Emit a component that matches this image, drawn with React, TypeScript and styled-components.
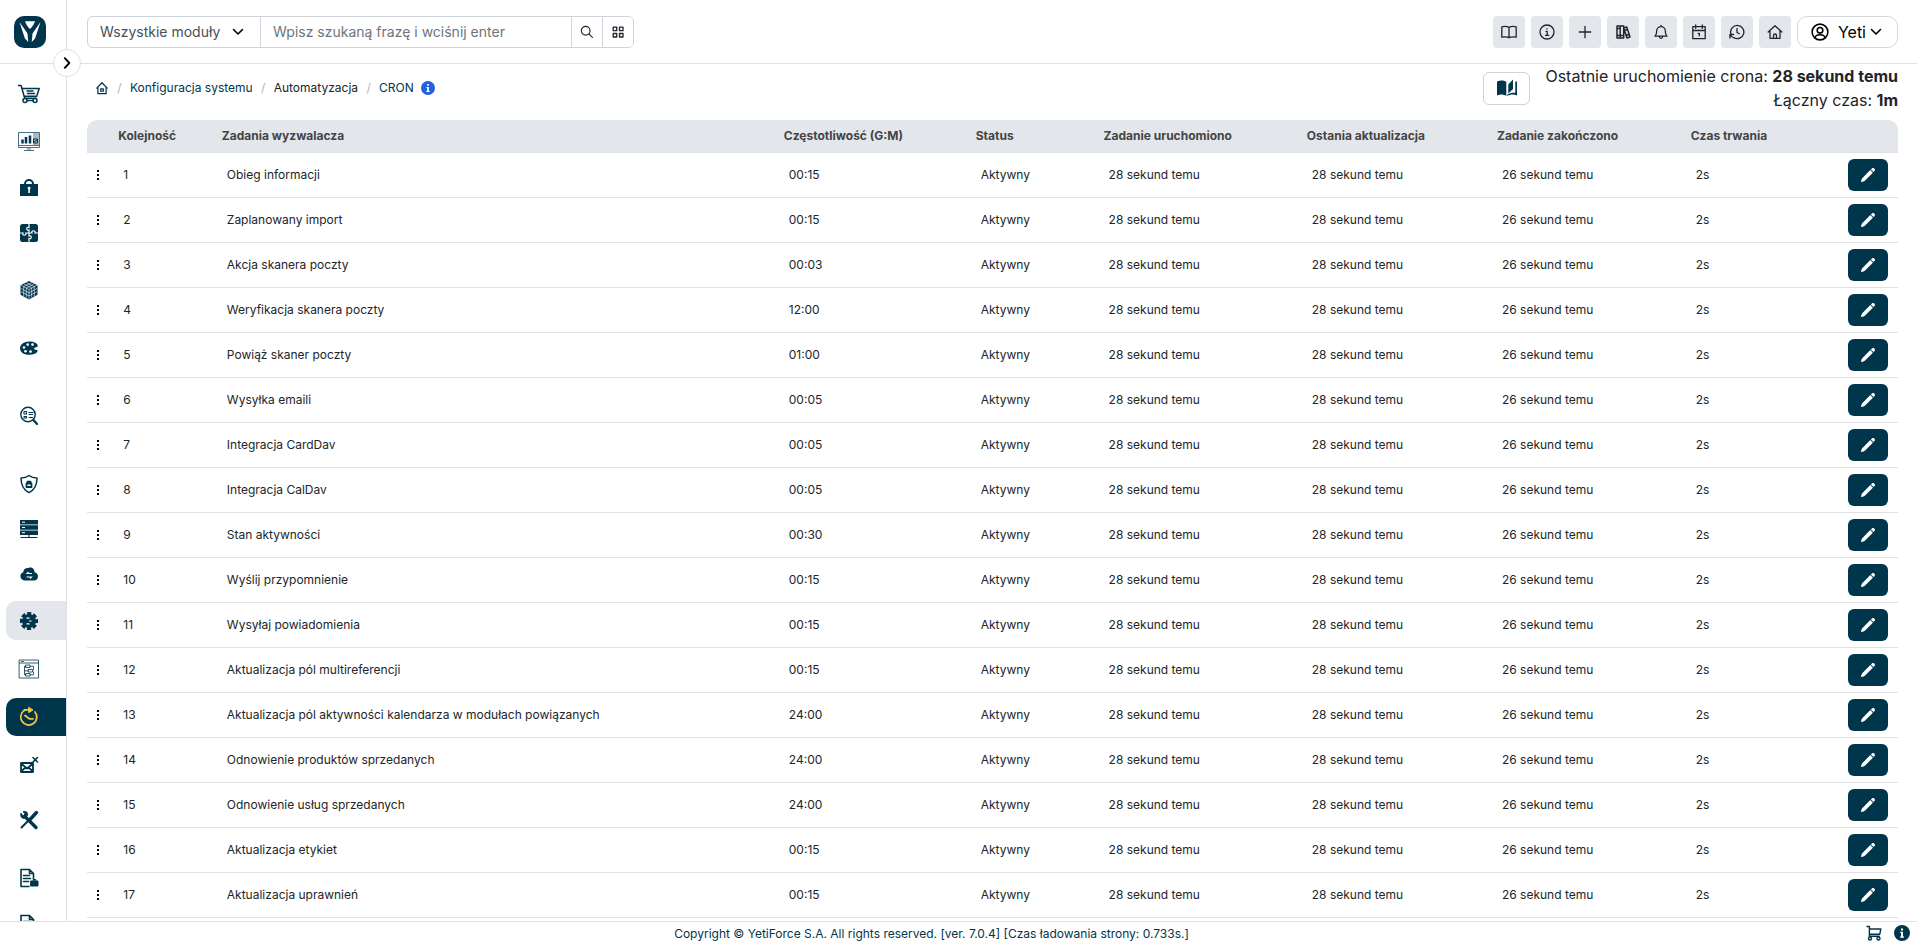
import React from "react";
import styled, { createGlobalStyle, css } from "styled-components";

const NAVY = "#00364b";
const LINE = "#dee2e6";
const FILL = "#e3e6eb";

const Global = createGlobalStyle`
  *, *::before, *::after { box-sizing: border-box; }
  body { margin: 0; font-family: Inter, "Liberation Sans", sans-serif; font-size: 12px; color: #212529; background: #fff; }
  button, input, select { font: inherit; color: inherit; margin: 0; }
  a { color: ${NAVY}; text-decoration: none; }
`;

const Page = styled.div`
  display: flex;
  flex-direction: column;
  height: 100vh;
  overflow: hidden;
`;

const Body = styled.div`
  display: flex;
  flex: 1;
  min-height: 0;
`;

const Sidebar = styled.aside`
  position: relative;
  display: flex;
  flex-direction: column;
  flex: none;
  width: 67px;
  border-right: 1px solid ${LINE};
`;

const LogoBox = styled.a`
  display: flex;
  flex: none;
  height: 64px;
  padding: 16px 14px;
  border-bottom: 1px solid ${LINE};
`;

const Toggle = styled.button`
  position: absolute;
  top: 49px;
  right: -15px;
  z-index: 2;
  display: grid;
  place-items: center;
  width: 28px;
  height: 28px;
  padding: 0;
  border: 1px solid ${LINE};
  border-radius: 50%;
  background: #fff;
  color: #000;
`;

const Menu = styled.nav`
  display: flex;
  flex-direction: column;
  flex: 1;
  min-height: 0;
  padding: 11px 0 0 6px;
  overflow: hidden;
`;

const MenuItem = styled.a<{ $h: number; $state?: "open" | "active" }>`
  display: flex;
  flex: none;
  align-items: center;
  height: ${(p) => p.$h}px;
  padding-left: 11px;
  color: ${NAVY};
  ${(p) => p.$state && css`border-radius: 10px 0 0 10px;`}
  ${(p) => p.$state === "open" && css`background: ${FILL};`}
  ${(p) => p.$state === "active" && css`background: ${NAVY}; color: #f6c344;`}
`;

const Main = styled.div`
  display: flex;
  flex-direction: column;
  flex: 1;
  min-width: 0;
`;

const Header = styled.header`
  display: flex;
  align-items: center;
  justify-content: space-between;
  flex: none;
  height: 64px;
  padding: 0 19px 0 20px;
  border-bottom: 1px solid ${LINE};
`;

const Search = styled.form`
  display: flex;
  height: 32px;
  border: 1px solid #ced4da;
  border-radius: 6px;
  overflow: hidden;
  font-size: 14px;
`;

const SelectWrap = styled.label`
  display: grid;
  align-items: center;
  width: 173px;
  border-right: 1px solid #ced4da;
  > * { grid-area: 1 / 1; }
  svg { justify-self: end; margin-right: 16px; pointer-events: none; color: #000; }
`;

const ModuleSelect = styled.select`
  width: 100%;
  height: 100%;
  padding: 0 12px;
  border: 0;
  appearance: none;
  background: none;
  color: #495057;
`;

const Phrase = styled.input`
  width: 310px;
  padding: 0 12px;
  border: 0;
  background: none;
  &::placeholder { color: #6c757d; opacity: 1; }
`;

const SearchButton = styled.button`
  display: grid;
  place-items: center;
  width: 31px;
  padding: 0;
  border: 0;
  border-left: 1px solid #ced4da;
  background: #fff;
`;

const Actions = styled.div`
  display: flex;
  gap: 6px;
`;

const ActionButton = styled.button`
  display: grid;
  place-items: center;
  width: 32px;
  height: 32px;
  padding: 0;
  border: 0;
  border-radius: 4px;
  background: ${FILL};
`;

const UserButton = styled.button`
  display: flex;
  align-items: center;
  height: 32px;
  padding: 0 15px 0 13px;
  border: 1px solid #d5d9dd;
  border-radius: 10px;
  background: #fff;
  color: #000;
  font-size: 16px;
  span { margin: 0 4px 0 9px; }
`;

const Content = styled.main`
  flex: 1;
  min-height: 0;
  padding: 0 19px 0 20px;
  overflow: hidden;
`;

const TitleBar = styled.div`
  display: flex;
  align-items: center;
  justify-content: space-between;
  height: 56px;
`;

const Crumbs = styled.nav`
  display: flex;
  align-items: center;
  margin-bottom: 8px;
  padding-left: 8px;
  line-height: 14px;
  svg { display: block; }
`;

const Slash = styled.span`
  width: 21px;
  color: #adb5bd;
  text-align: center;
`;

const InfoDot = styled.button`
  display: grid;
  margin: 0 0 0 7px;
  padding: 0;
  border: 0;
  background: none;
  color: #2361e0;
`;

const CronInfo = styled.div`
  display: flex;
  align-items: center;
  gap: 15px;
  margin-bottom: 8px;
`;

const ManualLink = styled.a`
  display: grid;
  place-items: center;
  width: 47px;
  height: 33px;
  border: 1px solid #ced4da;
  border-radius: 6px;
`;

const CronText = styled.div`
  font-size: 16px;
  line-height: 24px;
  text-align: right;
`;

const Table = styled.table`
  width: 100%;
  table-layout: fixed;
  border-collapse: separate;
  border-spacing: 0;
`;

const Th = styled.th`
  height: 33px;
  padding: 0 5px 2px;
  border-bottom: 1px solid ${LINE};
  background: ${FILL};
  color: #444;
  font-weight: 700;
  text-align: left;
  &:first-child { border-top-left-radius: 10px; }
  &:last-child { border-top-right-radius: 10px; }
`;

const Td = styled.td`
  height: 45px;
  padding: 0 10px 2px;
  border-bottom: 1px solid ${LINE};
`;

const DragCell = styled(Td)`
  padding: 0 7px;
  svg { display: block; }
`;

const DurationCell = styled(Td)`
  padding: 0 10px;
  > div { display: flex; align-items: center; }
  span { padding-bottom: 2px; }
`;

const EditButton = styled.button`
  display: grid;
  place-items: center;
  width: 40px;
  height: 32px;
  margin-left: auto;
  padding: 0;
  border: 0;
  border-radius: 6px;
  background: ${NAVY};
  color: #fff;
`;

const Footer = styled.footer`
  display: grid;
  grid-template-columns: 1fr 54px;
  align-items: center;
  flex: none;
  height: 23px;
  border-top: 1px solid ${LINE};
  color: ${NAVY};
  p { margin: 0; text-align: center; }
`;

const FooterLinks = styled.div`
  display: flex;
  align-items: center;
  justify-content: flex-end;
  gap: 12px;
  padding-right: 7px;
  a { display: grid; }
`;

type SvgProps = { size?: number; box?: number; children: React.ReactNode; w?: number };

/* Outline icon on a square grid. */
const Line = ({ size = 16, box = 16, w = 1.3, children }: SvgProps) => (
  <svg width={size} height={size} viewBox={`0 0 ${box} ${box}`} fill="none" stroke="currentColor" strokeWidth={w} strokeLinecap="round" strokeLinejoin="round" aria-hidden="true">
    {children}
  </svg>
);

/* Filled icon on a square grid. */
const Solid = ({ size = 16, box = 16, children }: SvgProps) => (
  <svg width={size} height={size} viewBox={`0 0 ${box} ${box}`} fill="currentColor" aria-hidden="true">
    {children}
  </svg>
);

const Logo = () => (
  <svg width="32" height="32" viewBox="0 0 32 32" aria-hidden="true">
    <rect width="32" height="32" rx="10" fill={NAVY} />
    <path fill="#fff" d="M11 5.300h10l-1.500 3.500-2.800 3.700h-1.400l-2.800-3.700zM5.500 6l8 11.500.8 8.500-3.400-3.500zM26.500 6l-8 11.500-.8 8.500 3.400-3.500z" />
  </svg>
);

const Chevron = ({ size = 12 }: { size?: number }) => (
  <Line size={size} box={12} w={1.6}><path d="M1.500 3.500 6 8l4.500-4.500" /></Line>
);

const Cart = () => (
  <Line size={24} box={24} w={1.5}>
    <path d="M1.500 3.500h2.600l3.600 12.800h11.600M5.200 6.500h17l-2.500 7.800H7.500M10 9h6M10.500 11.500h7" />
    <circle cx="8" cy="18.600" r="2" /><circle cx="18" cy="18.600" r="2" /><path d="M10 18.600h6" />
  </Line>
);

const SmallCart = () => (
  <Line w={1.4}>
    <path d="M1 1.500h2.400v9.700h9.800M3.400 4h11.400l-1 5.200H3.400" />
    <circle cx="4" cy="13.500" r="1.500" /><circle cx="12.500" cy="13.500" r="1.500" />
  </Line>
);

const InfoSolid = ({ size = 14 }: { size?: number }) => (
  <Solid size={size}>
    <path fillRule="evenodd" d="M8 0a8 8 0 1 1 0 16A8 8 0 0 1 8 0zM7 3.500v2h2v-2zM6.200 6.800V8H7v3.500h-.9v1.200h3.900v-1.200H9V6.800z" />
  </Solid>
);

const Home = () => (
  <Line><path d="M1.200 8 8 1.700 14.800 8M3 6.600v7.700h10V6.600M6.500 14v-2.500a1.500 1.500 0 0 1 3 0V14" /></Line>
);

const CrumbHome = () => (
  <Line size={14} w={1.4}><path d="M2 8.200 8 2l6 6.200M3.300 7.200v7.300h9.400V7.200M6.500 9h3v2.700h-3z" /></Line>
);

const menu: { label: string; h: number; state?: "open" | "active"; icon: React.ReactNode }[] = [
  { label: "Sklep", h: 38, icon: <Cart /> },
  {
    label: "Pulpit", h: 56,
    icon: (
      <svg width="24" height="24" viewBox="0 0 24 24" fill="none" aria-hidden="true">
        <path d="M16 4h6v12h-6z" fill="#a9bcc6" />
        <path d="M1.500 3.500h21v15h-21zM1.500 16.500h21" stroke="#49708a" strokeWidth="1" />
        <path d="M5.500 10.500v4M9 8v6.500M13 6.500v8" stroke={NAVY} strokeWidth="2.500" />
        <path d="M16.500 10h4v4h-4zM16.500 13l4-2" stroke={NAVY} />
        <path d="M7 21.500h10M10 20h4" stroke="#49708a" strokeWidth="1.200" />
      </svg>
    ),
  },
  {
    label: "Uprawnienia", h: 38,
    icon: <Solid size={24} box={24}><path fillRule="evenodd" d="M7 8a5 5 0 0 1 10 0h4v12H3V8zm2 0h6a3 3 0 0 0-6 0zm1.500 4 .8 1.500V17h1.600v-3.500l.8-1.500a1.700 1.700 0 0 0-3.200 0z" /></Solid>,
  },
  {
    label: "Procesy", h: 52,
    icon: (
      <svg width="24" height="24" viewBox="0 0 24 24" aria-hidden="true">
        <rect x="3" y="3" width="18" height="18" rx="2.500" fill={NAVY} />
        <path d="M12 3v3.500c-3-1.500-3 4 0 2.500v6c3-1.500 3 4 0 2.500V21M3 12h3c-1.500 3 4 3 2.800 0H15c-1.500-3 4.300-3 3 0h3" fill="none" stroke="#fff" strokeWidth="1.200" />
      </svg>
    ),
  },
  {
    label: "Moduły", h: 62,
    icon: (
      <svg width="24" height="24" viewBox="0 0 24 24" aria-hidden="true">
        <path d="m12 3 8.500 4.200v9.600L12 21.500l-8.500-4.700V7.200z" fill={NAVY} />
        <path d="M4 7.200 12 11.500l8-4.300M12 11.500V21M4 10.500l8 4.300 8-4.300M4 13.700l8 4.200 8-4.200M6.700 5.800l8 4.200v9.500M9.300 4.500l8 4.200v9.500M17.300 5.800l-8 4.200v9.500M14.700 4.500l-8 4.200v9.500" fill="none" stroke="#fff" strokeWidth=".6" />
      </svg>
    ),
  },
  {
    label: "Wygląd", h: 54,
    icon: (
      <svg width="24" height="24" viewBox="0 0 24 24" aria-hidden="true">
        <path d="M12 5.500c5 0 9 2 8.800 4.600-.2 1.700-3.800 1-3.600 2.800.2 1.300 3.500.1 3.400 2.100C20.300 17.300 16 18.800 12 18.800c-5.500 0-9-3-9-6.600s4-6.700 9-6.700z" fill={NAVY} />
        <g fill="#fff"><circle cx="15.500" cy="8.600" r="1.300" /><circle cx="10.700" cy="8.600" r="1.300" /><circle cx="7" cy="11.500" r="1.300" /><circle cx="8.500" cy="15.200" r="1.300" /><circle cx="13.500" cy="15.600" r="1.300" /></g>
      </svg>
    ),
  },
  {
    label: "Wyszukiwanie", h: 82,
    icon: <Line size={24} box={24} w={1.4}><circle cx="11" cy="10.500" r="7.200" /><path d="M7 7.500h2.500v2.500H7zM7 12.500h2.500v1.500H7zM12 8.500h4M12 10.500h3.500M12 13.500h3.500" strokeWidth="1.100" /><path d="m16.500 16 3.500 4" strokeWidth="2.200" /></Line>,
  },
  {
    label: "Bezpieczeństwo", h: 54,
    icon: <Line size={24} box={24} w={1.5}><path d="M12 3.500c2.500 2 5 2.600 8 2.600 0 7.500-2.500 12-8 14.500-5.500-2.500-8-7-8-14.500 3 0 5.500-.6 8-2.600z" /><path d="M9.500 11.500h5v3.500h-5zM10.500 11V9.600h3V11" strokeWidth="1.800" /></Line>,
  },
  {
    label: "Serwer", h: 36,
    icon: (
      <svg width="24" height="24" viewBox="0 0 24 24" aria-hidden="true">
        <path d="M3 3h18v4.500H3zM3 8.300h18v4.500H3zM3 13.500h18V18H3z" fill={NAVY} />
        <path d="M5 5.200h3M5 10.500h3M5 15.700h3" stroke="#fff" />
        <path d="M12 18v2.500M3.500 20.500h17" stroke={NAVY} strokeWidth="1.100" />
      </svg>
    ),
  },
  {
    label: "Chmura", h: 54,
    icon: (
      <svg width="24" height="24" viewBox="0 0 24 24" aria-hidden="true">
        <path d="M7.500 18.500a4.300 4.300 0 0 1-1.300-8.300C6.500 7 9 5.500 11.500 6c3-1.300 6.200.8 6 4.200 4.500.3 4.700 8 0 8.300z" fill={NAVY} />
        <path d="M15 11.500H10l1.500-1.500M9.500 15h5L13 16.500" stroke="#fff" strokeWidth="1.100" fill="none" />
      </svg>
    ),
  },
  {
    label: "Automatyzacja", h: 39, state: "open",
    icon: (
      <svg width="24" height="24" viewBox="0 0 24 24" aria-hidden="true">
        <circle cx="12" cy="12" r="7" fill={NAVY} />
        <circle cx="12" cy="12" r="7.300" fill="none" stroke={NAVY} strokeWidth="3.600" strokeDasharray="3.900 1.830" strokeDashoffset="2" />
        <path d="M9.500 9.200h3M9.500 14.800h3M12 12h2.500" stroke="#fff" strokeWidth="1.200" />
      </svg>
    ),
  },
  {
    label: "Procesy automatyczne", h: 58,
    icon: <Line size={24} box={24} w={0.8}><path d="M2.500 3h19v18h-19zM2.500 6h19M4.500 4.500h2M9 8h4v2.500H9zM11.500 12.500h4V15h-4zM9 16.500h4V19H9zM13 9.200h3.500v3.500M9 9.200H7.500v4.600h4M7.500 13.500v4.200H9M13 17.800h3.500V15" /></Line>,
  },
  {
    label: "CRON", h: 38, state: "active",
    icon: <Line size={24} box={24} w={1.8}><path d="M18 7a8 8 0 1 1-10-2" strokeDasharray="29 1.500 1.500 1.500 1.500 1.500" /><path d="M7.500 4.800h5" /><path d="m12 2.500 4 2.400-4 2.600z" fill="currentColor" strokeWidth="1" /><path d="m8 10.500 4.300 3.300H16" /></Line>,
  },
  {
    label: "Konfiguracja poczty", h: 58,
    icon: <Line size={24} box={24} w={1.8}><path d="M4 10h12v9H4zM4 10.500l6 5 6-5M4 18.500l4.500-4M16 18.500l-4.500-4" /><path d="m16 4.500 4.500 4.500M20.500 4.500 16 9" strokeWidth="1.600" /></Line>,
  },
  {
    label: "Narzędzia", h: 52,
    icon: <Line size={24} box={24} w={2}><path d="m8.500 9 10.500 10.500" strokeWidth="3.400" /><path d="M4 5.500 6.200 7.800l2-2L6 3.700c3.500-1 5.500 1.500 4.200 4L7.700 10.200C5 11 3 8.500 4 5.500z" fill="currentColor" strokeWidth="1" /><path d="m11.500 12.500-7 7" /><path d="m19.500 4.500-6 6.500" strokeWidth="3.400" /></Line>,
  },
  {
    label: "Dzienniki", h: 64,
    icon: <Line size={24} box={24} w={1.6}><path d="M12 20.500H4V3.500h8.500l4 4V13M12.500 3.500v4h4M6.500 9.500h6M6.500 12.500h7M6.500 15.500h5" /><path d="M14 15h7v5h-7zM16.200 14.500v-1h2.600v1" fill="currentColor" strokeWidth="1" /></Line>,
  },
  {
    label: "Logi", h: 28,
    icon: <Line size={24} box={24} w={1.6}><path d="M12 20.500H4V3.500h8.500l4 4V20.500zM12.500 3.500v4h4M6.500 9.500h6M6.500 12.500h7" /></Line>,
  },
];

const actions = [
  { label: "Podręcznik", icon: <Line><path d="M8 3.300C6 2.300 3 2.300.8 2.800v10.400c2.200-.5 5.200-.5 7.200.5 2-1 5-1 7.200-.5V2.800C13 2.300 10 2.300 8 3.300zM8 3.300v10.400" /></Line> },
  { label: "Informacje", icon: <Line><circle cx="8" cy="8" r="7" /><path d="M7 7.300h1.200v4M6.500 11.400h3.200M8 4.700v.2" /></Line> },
  { label: "Dodaj", icon: <Line><path d="M8 2.300v11.400M2.300 8h11.400" /></Line> },
  { label: "Biblioteka", icon: <Line w={1.5}><path d="M2 2h3.200v12H2zM5.200 2h3.500v12H5.200zM2 11.500h6.700M2 4.500h3M8.700 4l3-1 3.300 10-3 1zM11 11.500l3-1M9.400 6.500l3-1" /></Line> },
  { label: "Powiadomienia", icon: <Line><path d="M2 12.200c1.500-1.400 1.700-3 1.700-5.200a4.300 4.300 0 0 1 8.600 0c0 2.200.2 3.800 1.700 5.200zM6.300 12.500c.2 2.500 3.200 2.500 3.400 0M8 2.500V1.300" /></Line> },
  { label: "Kalendarz", icon: <Line><path d="M1.800 2.700h12.400v12H1.800zM1.800 6.500h12.400M4.700 1v3.300M11.300 1v3.300M7.300 9.500h1v2.300" /></Line> },
  { label: "Historia", icon: <Line><path d="M1.800 9.500A6.600 6.600 0 1 1 5 13.800M1 14v-3.500h3.500M1.200 10.700C2.200 12.500 3.500 13.500 5.500 14M8 4.500v4l2.300 1.300" /></Line> },
  { label: "Strona główna", icon: <Home /> },
];

const columns = [
  { label: "", width: "1.45%" }, { label: "Kolejność", width: "5.72%" },
  { label: "Zadania wyzwalacza", width: "31.03%" }, { label: "Częstotliwość (G:M)", width: "10.6%" },
  { label: "Status", width: "7.06%" }, { label: "Zadanie uruchomiono", width: "11.22%" },
  { label: "Ostania aktualizacja", width: "10.5%" }, { label: "Zadanie zakończono", width: "10.7%" },
  { label: "Czas trwania", width: "11.72%" },
];

const tasks: [string, string][] = [
  ["Obieg informacji", "00:15"],
  ["Zaplanowany import", "00:15"],
  ["Akcja skanera poczty", "00:03"],
  ["Weryfikacja skanera poczty", "12:00"],
  ["Powiąż skaner poczty", "01:00"],
  ["Wysyłka emaili", "00:05"],
  ["Integracja CardDav", "00:05"],
  ["Integracja CalDav", "00:05"],
  ["Stan aktywności", "00:30"],
  ["Wyślij przypomnienie", "00:15"],
  ["Wysyłaj powiadomienia", "00:15"],
  ["Aktualizacja pól multireferencji", "00:15"],
  ["Aktualizacja pól aktywności kalendarza w modułach powiązanych", "24:00"],
  ["Odnowienie produktów sprzedanych", "24:00"],
  ["Odnowienie usług sprzedanych", "24:00"],
  ["Aktualizacja etykiet", "00:15"],
  ["Aktualizacja uprawnień", "00:15"],
];

export default function App() {
  return (
    <Page>
      <Global />
      <Body>
        <Sidebar>
          <LogoBox href="#" aria-label="YetiForce"><Logo /></LogoBox>
          <Toggle type="button" aria-label="Rozwiń menu">
            <Line size={12} box={12} w={1.9}><path d="M3.800 1.200 8.300 6l-4.500 4.800" /></Line>
          </Toggle>
          <Menu aria-label="Menu">
            {menu.map((m) => (
              <MenuItem key={m.label} href="#" aria-label={m.label} $h={m.h} $state={m.state}>{m.icon}</MenuItem>
            ))}
          </Menu>
        </Sidebar>
        <Main>
          <Header>
            <Search onSubmit={(e) => e.preventDefault()}>
              <SelectWrap>
                <ModuleSelect aria-label="Moduł"><option>Wszystkie moduły</option></ModuleSelect>
                <Chevron />
              </SelectWrap>
              <Phrase type="text" aria-label="Szukana fraza" placeholder="Wpisz szukaną frazę i wciśnij enter" />
              <SearchButton type="submit" aria-label="Szukaj">
                <Line size={14} w={1.3}><circle cx="6.500" cy="6.500" r="5" /><path d="m10.200 10.200 4 4" /></Line>
              </SearchButton>
              <SearchButton type="button" aria-label="Wyszukiwanie zaawansowane">
                <Line size={14} w={1.5}><path d="M2.500 2.500h4v4h-4zM9.700 2.500h4v4h-4zM2.500 9.700h4v4h-4zM9.700 9.700h4v4h-4z" /></Line>
              </SearchButton>
            </Search>
            <Actions>
              {actions.map((a) => (
                <ActionButton key={a.label} type="button" aria-label={a.label}>{a.icon}</ActionButton>
              ))}
              <UserButton type="button">
                <Line size={18} w={1.4}><circle cx="8" cy="8" r="7" /><circle cx="8" cy="6.500" r="2.500" /><path d="M3.500 13c1.200-3.400 7.800-3.400 9 0" /></Line>
                <span>Yeti</span>
                <Chevron />
              </UserButton>
            </Actions>
          </Header>
          <Content>
            <TitleBar>
              <Crumbs aria-label="Ścieżka">
                <a href="#" aria-label="Strona główna"><CrumbHome /></a>
                <Slash>/</Slash>
                <a href="#">Konfiguracja systemu</a>
                <Slash>/</Slash>
                <span>Automatyzacja</span>
                <Slash>/</Slash>
                <a href="#">CRON</a>
                <InfoDot type="button" aria-label="Informacja"><InfoSolid /></InfoDot>
              </Crumbs>
              <CronInfo>
                <ManualLink href="#" aria-label="Dokumentacja">
                  <svg width="20" height="18" viewBox="0 0 20 18" aria-hidden="true">
                    <path fill={NAVY} d="M0 2.500C3 1 6.500 1 9.300 2.800V17C6.500 15 3 15 0 16.500zM11.300 5.500 16 .5v9.500l-4.700 4.500zM10.300 15.500c3-1.800 5.500-2 8-1.700V2.200l1.700.6v13.700c-3.200-1.500-6.700-1.500-9.700.5z" />
                  </svg>
                </ManualLink>
                <CronText>
                  <div>Ostatnie uruchomienie crona: <strong>28 sekund temu</strong></div>
                  <div>Łączny czas: <strong>1m</strong></div>
                </CronText>
              </CronInfo>
            </TitleBar>
            <Table>
              <colgroup>{columns.map((c) => <col key={c.label} style={{ width: c.width }} />)}</colgroup>
              <thead>
                <tr>{columns.map((c) => <Th key={c.label} scope="col">{c.label}</Th>)}</tr>
              </thead>
              <tbody>
                {tasks.map(([name, freq], i) => (
                  <tr key={name}>
                    <DragCell>
                      <svg width="8" height="12" viewBox="0 0 8 12" aria-hidden="true"><path d="M3 1h2v2H3zM3 5h2v2H3zM3 9h2v2H3z" fill="#000" /></svg>
                    </DragCell>
                    <Td>{i + 1}</Td>
                    <Td>{name}</Td>
                    <Td>{freq}</Td>
                    <Td>Aktywny</Td>
                    <Td>28 sekund temu</Td>
                    <Td>28 sekund temu</Td>
                    <Td>26 sekund temu</Td>
                    <DurationCell>
                      <div>
                        <span>2s</span>
                        <EditButton type="button" aria-label={`Edytuj: ${name}`}>
                          <Solid><path d="M1 15c.2-2 .6-3.200 1.500-4.100L10.300 3.100l2.600 2.600-7.800 7.800C4.200 14.400 3 14.900 1 15zM10.900 2.500l1-1c1.600-1.500 4.100 1 2.600 2.600l-1 1z" /></Solid>
                        </EditButton>
                      </div>
                    </DurationCell>
                  </tr>
                ))}
              </tbody>
            </Table>
          </Content>
        </Main>
      </Body>
      <Footer>
        <p>Copyright © YetiForce S.A. All rights reserved. [ver. 7.0.4] [Czas ładowania strony: 0.733s.]</p>
        <FooterLinks>
          <a href="#" aria-label="Sklep"><SmallCart /></a>
          <a href="#" aria-label="Informacje"><InfoSolid size={16} /></a>
        </FooterLinks>
      </Footer>
    </Page>
  );
}
